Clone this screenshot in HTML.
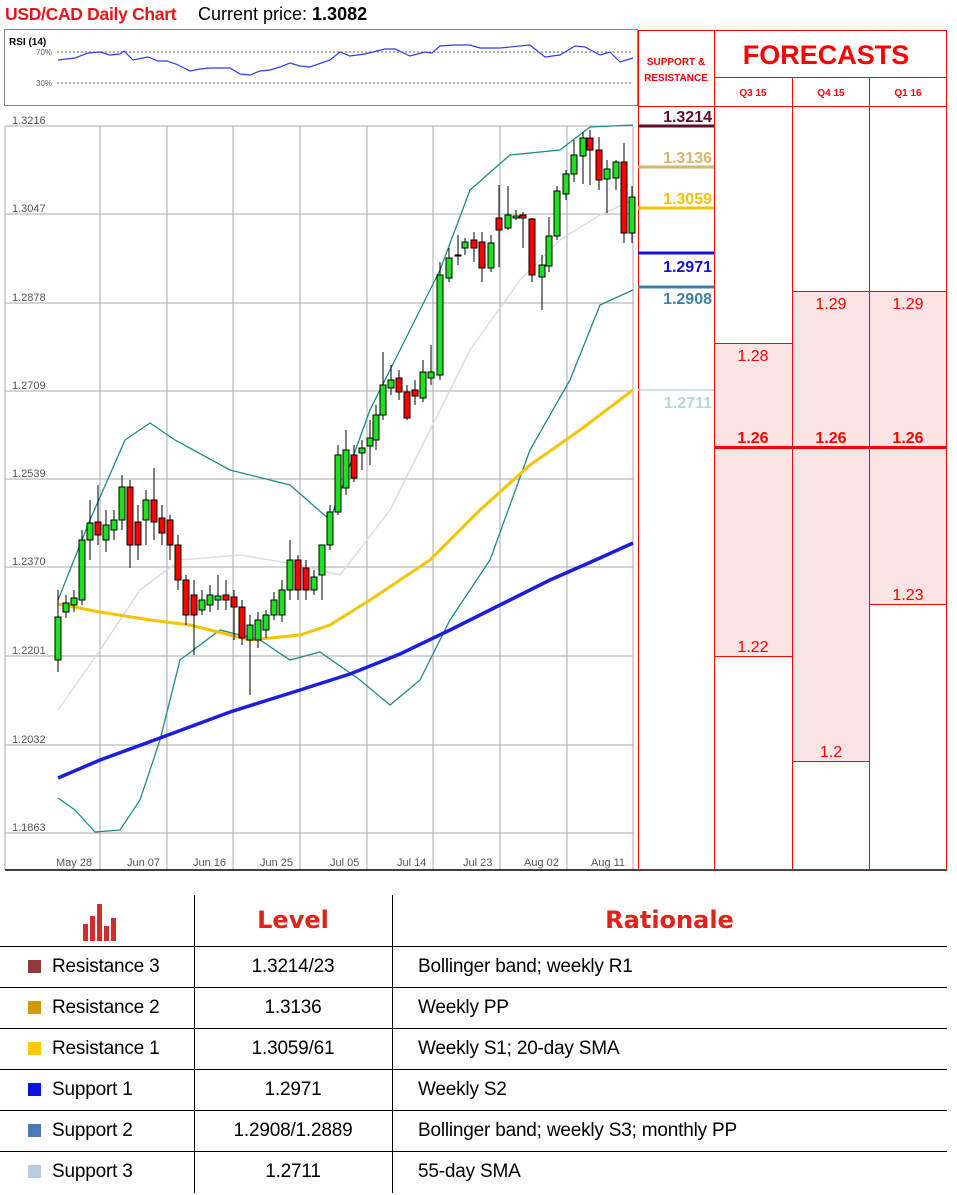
<!DOCTYPE html>
<html><head><meta charset="utf-8"><style>
body{margin:0;width:957px;height:1195px;background:#fff;font-family:"Liberation Sans",sans-serif;position:relative;overflow:hidden}
.a{position:absolute}
.row{position:absolute;left:0;width:947px;height:41px;border-top:1.5px solid #000;font-size:19px;color:#000}
.row div{position:absolute;top:9px;letter-spacing:-0.2px}
.sq{position:absolute;left:28px;top:13px!important;width:13px;height:13px}
</style></head><body>
<div class="a" style="left:5px;top:4px;font-size:17.5px;font-weight:bold;color:#e8151b;letter-spacing:-0.3px">USD/CAD Daily Chart</div>
<div class="a" style="left:198px;top:4px;font-size:18px;color:#000">Current price: <b>1.3082</b></div>

<svg class="a" style="left:0;top:0" width="957" height="880">
<rect x="4.5" y="29.5" width="633" height="76" fill="#fff" stroke="#888"/>
<text x="9" y="45" font-size="10" font-weight="bold" font-family="Liberation Sans">RSI (14)</text>
<text x="36" y="55" font-size="8" fill="#666" font-family="Liberation Sans">70%</text>
<text x="36" y="86" font-size="8" fill="#666" font-family="Liberation Sans">30%</text>
<line x1="57" y1="52" x2="633" y2="52" stroke="#666" stroke-dasharray="2,2"/>
<line x1="57" y1="83" x2="633" y2="83" stroke="#666" stroke-dasharray="2,2"/>
<polyline fill="none" stroke="#2c3cf0" stroke-width="1.2" points="58,60 75,58 88,53 100,52 110,55 120,54 124,51 133,60 148,57 158,61 167,61 176,64 190,71 200,69 210,68 230,68 240,74 250,75 260,71 270,70 280,67 290,63 300,66 310,67 330,60 340,52 350,56 365,54 385,49 395,49 410,56 425,52 432,53 440,46 455,45 470,45 480,48 500,48 530,45 545,57 560,55 575,46 585,47 600,55 610,52 620,62 633,58"/>
<g stroke="#aaa" stroke-width="1">
<line x1="5" y1="126" x2="633" y2="126"/><line x1="5" y1="214" x2="633" y2="214"/><line x1="5" y1="303" x2="633" y2="303"/><line x1="5" y1="391" x2="633" y2="391"/><line x1="5" y1="479" x2="633" y2="479"/><line x1="5" y1="567" x2="633" y2="567"/><line x1="5" y1="656" x2="633" y2="656"/><line x1="5" y1="745" x2="633" y2="745"/><line x1="5" y1="833" x2="633" y2="833"/>
<line x1="100" y1="126" x2="100" y2="870"/><line x1="167" y1="126" x2="167" y2="870"/><line x1="233" y1="126" x2="233" y2="870"/><line x1="300" y1="126" x2="300" y2="870"/><line x1="367" y1="126" x2="367" y2="870"/><line x1="433" y1="126" x2="433" y2="870"/><line x1="500" y1="126" x2="500" y2="870"/><line x1="567" y1="126" x2="567" y2="870"/><line x1="633" y1="126" x2="633" y2="870"/>
<line x1="5" y1="126" x2="5" y2="870"/>
</g>
<g font-size="11" fill="#555" font-family="Liberation Sans">
<text x="12" y="124">1.3216</text><text x="12" y="212">1.3047</text><text x="12" y="301">1.2878</text><text x="12" y="389">1.2709</text><text x="12" y="477">1.2539</text><text x="12" y="565">1.2370</text><text x="12" y="654">1.2201</text><text x="12" y="743">1.2032</text><text x="12" y="831">1.1863</text>
<text x="56" y="866">May 28</text><text x="127" y="866">Jun 07</text><text x="193" y="866">Jun 16</text><text x="260" y="866">Jun 25</text><text x="330" y="866">Jul 05</text><text x="397" y="866">Jul 14</text><text x="463" y="866">Jul 23</text><text x="524" y="866">Aug 02</text><text x="591" y="866">Aug 11</text>
</g>
<polyline fill="none" stroke="#ddd" stroke-width="1.5" points="58,710 100,650 140,590 180,560 240,555 300,565 340,575 390,510 430,430 470,350 520,280 560,240 600,215 633,200"/>
<polyline fill="none" stroke="#1f8a8a" stroke-width="1.3" points="58,600 90,520 125,440 150,423 175,440 230,470 290,485 330,520 370,410 400,350 440,270 470,190 510,155 560,150 590,127 633,125"/>
<polyline fill="none" stroke="#1f8a8a" stroke-width="1.3" points="58,798 75,810 95,832 120,830 140,800 160,740 180,660 220,630 260,640 290,660 320,652 360,680 390,705 420,680 450,620 490,560 530,450 570,380 600,305 633,290"/>
<polyline fill="none" stroke="#f5c400" stroke-width="3" points="58,604 100,612 150,620 190,625 250,640 300,635 330,625 370,600 400,580 430,560 480,510 530,465 580,430 633,390"/>
<polyline fill="none" stroke="#1a1ee0" stroke-width="3.5" points="58,778 100,760 160,738 230,712 300,690 350,674 400,654 450,630 500,605 550,580 600,558 633,543"/>
<g stroke="#000" stroke-width="1">
<line x1="58" y1="590" x2="58" y2="672"/><rect x="55" y="617" width="6" height="43" fill="#1ee01e"/>
<line x1="66" y1="595" x2="66" y2="618"/><rect x="63" y="603" width="6" height="9" fill="#1ee01e"/>
<line x1="74" y1="590" x2="74" y2="612"/><rect x="71" y="598" width="6" height="7" fill="#1ee01e"/>
<line x1="82" y1="530" x2="82" y2="605"/><rect x="79" y="540" width="6" height="60" fill="#1ee01e"/>
<line x1="90" y1="500" x2="90" y2="560"/><rect x="87" y="523" width="6" height="17" fill="#1ee01e"/>
<line x1="98" y1="485" x2="98" y2="545"/><rect x="95" y="522" width="6" height="13" fill="#f00"/>
<line x1="106" y1="510" x2="106" y2="552"/><rect x="103" y="525" width="6" height="15" fill="#1ee01e"/>
<line x1="114" y1="510" x2="114" y2="540"/><rect x="111" y="520" width="6" height="10" fill="#1ee01e"/>
<line x1="122" y1="475" x2="122" y2="530"/><rect x="119" y="487" width="6" height="33" fill="#1ee01e"/>
<line x1="130" y1="480" x2="130" y2="568"/><rect x="127" y="487" width="6" height="58" fill="#f00"/>
<line x1="138" y1="505" x2="138" y2="560"/><rect x="135" y="522" width="6" height="23" fill="#f00"/>
<line x1="146" y1="490" x2="146" y2="545"/><rect x="143" y="500" width="6" height="20" fill="#1ee01e"/>
<line x1="154" y1="468" x2="154" y2="540"/><rect x="151" y="500" width="6" height="22" fill="#f00"/>
<line x1="162" y1="505" x2="162" y2="545"/><rect x="159" y="518" width="6" height="15" fill="#f00"/>
<line x1="170" y1="515" x2="170" y2="560"/><rect x="167" y="520" width="6" height="25" fill="#f00"/>
<line x1="178" y1="535" x2="178" y2="590"/><rect x="175" y="545" width="6" height="35" fill="#f00"/>
<line x1="186" y1="575" x2="186" y2="625"/><rect x="183" y="580" width="6" height="35" fill="#f00"/>
<line x1="194" y1="580" x2="194" y2="655"/><rect x="191" y="595" width="6" height="20" fill="#f00"/>
<line x1="202" y1="590" x2="202" y2="615"/><rect x="199" y="600" width="6" height="10" fill="#1ee01e"/>
<line x1="210" y1="585" x2="210" y2="612"/><rect x="207" y="595" width="6" height="10" fill="#1ee01e"/>
<line x1="218" y1="575" x2="218" y2="610"/><rect x="215" y="596" width="6" height="4" fill="#1ee01e"/>
<line x1="226" y1="580" x2="226" y2="610"/><rect x="223" y="595" width="6" height="5" fill="#f00"/>
<line x1="234" y1="590" x2="234" y2="640"/><rect x="231" y="597" width="6" height="10" fill="#f00"/>
<line x1="242" y1="600" x2="242" y2="645"/><rect x="239" y="607" width="6" height="31" fill="#f00"/>
<line x1="250" y1="615" x2="250" y2="695"/><rect x="247" y="625" width="6" height="15" fill="#1ee01e"/>
<line x1="258" y1="612" x2="258" y2="648"/><rect x="255" y="620" width="6" height="20" fill="#1ee01e"/>
<line x1="266" y1="610" x2="266" y2="638"/><rect x="263" y="615" width="6" height="15" fill="#1ee01e"/>
<line x1="274" y1="592" x2="274" y2="620"/><rect x="271" y="600" width="6" height="15" fill="#1ee01e"/>
<line x1="282" y1="580" x2="282" y2="622"/><rect x="279" y="590" width="6" height="25" fill="#1ee01e"/>
<line x1="290" y1="540" x2="290" y2="600"/><rect x="287" y="560" width="6" height="30" fill="#1ee01e"/>
<line x1="298" y1="555" x2="298" y2="600"/><rect x="295" y="560" width="6" height="30" fill="#f00"/>
<line x1="306" y1="560" x2="306" y2="600"/><rect x="303" y="568" width="6" height="22" fill="#f00"/>
<line x1="314" y1="570" x2="314" y2="595"/><rect x="311" y="577" width="6" height="13" fill="#1ee01e"/>
<line x1="322" y1="545" x2="322" y2="600"/><rect x="319" y="545" width="6" height="30" fill="#1ee01e"/>
<line x1="330" y1="505" x2="330" y2="550"/><rect x="327" y="512" width="6" height="33" fill="#1ee01e"/>
<line x1="338" y1="445" x2="338" y2="515"/><rect x="335" y="455" width="6" height="57" fill="#1ee01e"/>
<line x1="346" y1="430" x2="346" y2="495"/><rect x="343" y="450" width="6" height="38" fill="#1ee01e"/>
<line x1="354" y1="445" x2="354" y2="482"/><rect x="351" y="455" width="6" height="23" fill="#f00"/>
<line x1="362" y1="440" x2="362" y2="470"/><rect x="359" y="448" width="6" height="5" fill="#1ee01e"/>
<line x1="370" y1="420" x2="370" y2="465"/><rect x="367" y="438" width="6" height="8" fill="#1ee01e"/>
<line x1="376" y1="405" x2="376" y2="450"/><rect x="373" y="415" width="6" height="25" fill="#1ee01e"/>
<line x1="383" y1="352" x2="383" y2="420"/><rect x="380" y="385" width="6" height="30" fill="#1ee01e"/>
<line x1="391" y1="365" x2="391" y2="395"/><rect x="388" y="380" width="6" height="8" fill="#1ee01e"/>
<line x1="399" y1="370" x2="399" y2="400"/><rect x="396" y="378" width="6" height="14" fill="#f00"/>
<line x1="407" y1="385" x2="407" y2="420"/><rect x="404" y="392" width="6" height="26" fill="#f00"/>
<line x1="415" y1="380" x2="415" y2="405"/><rect x="412" y="390" width="6" height="6" fill="#f00"/>
<line x1="423" y1="360" x2="423" y2="402"/><rect x="420" y="372" width="6" height="26" fill="#1ee01e"/>
<line x1="431" y1="345" x2="431" y2="385"/><rect x="428" y="372" width="6" height="6" fill="#1ee01e"/>
<line x1="440" y1="262" x2="440" y2="380"/><rect x="437" y="275" width="6" height="100" fill="#1ee01e"/>
<line x1="449" y1="248" x2="449" y2="282"/><rect x="446" y="258" width="6" height="20" fill="#1ee01e"/>
<line x1="458" y1="235" x2="458" y2="265"/><rect x="455" y="255" width="6" height="1" fill="#1ee01e"/>
<line x1="465" y1="238" x2="465" y2="255"/><rect x="462" y="242" width="6" height="6" fill="#1ee01e"/>
<line x1="474" y1="232" x2="474" y2="262"/><rect x="471" y="240" width="6" height="8" fill="#f00"/>
<line x1="482" y1="232" x2="482" y2="282"/><rect x="479" y="242" width="6" height="26" fill="#f00"/>
<line x1="491" y1="235" x2="491" y2="272"/><rect x="488" y="243" width="6" height="25" fill="#1ee01e"/>
<line x1="499" y1="185" x2="499" y2="267"/><rect x="496" y="218" width="6" height="12" fill="#f00"/>
<line x1="508" y1="186" x2="508" y2="230"/><rect x="505" y="215" width="6" height="13" fill="#1ee01e"/>
<line x1="516" y1="210" x2="516" y2="220"/><rect x="513" y="216" width="6" height="2" fill="#1ee01e"/>
<line x1="523" y1="212" x2="523" y2="248"/><rect x="520" y="215" width="6" height="3" fill="#f00"/>
<line x1="532" y1="218" x2="532" y2="282"/><rect x="529" y="219" width="6" height="56" fill="#f00"/>
<line x1="542" y1="255" x2="542" y2="310"/><rect x="539" y="265" width="6" height="12" fill="#1ee01e"/>
<line x1="549" y1="217" x2="549" y2="272"/><rect x="546" y="236" width="6" height="30" fill="#1ee01e"/>
<line x1="557" y1="186" x2="557" y2="240"/><rect x="554" y="191" width="6" height="45" fill="#1ee01e"/>
<line x1="566" y1="170" x2="566" y2="200"/><rect x="563" y="174" width="6" height="20" fill="#1ee01e"/>
<line x1="574" y1="140" x2="574" y2="182"/><rect x="571" y="155" width="6" height="19" fill="#1ee01e"/>
<line x1="583" y1="132" x2="583" y2="184"/><rect x="580" y="138" width="6" height="18" fill="#1ee01e"/>
<line x1="590" y1="130" x2="590" y2="185"/><rect x="587" y="138" width="6" height="12" fill="#f00"/>
<line x1="599" y1="137" x2="599" y2="190"/><rect x="596" y="150" width="6" height="30" fill="#f00"/>
<line x1="607" y1="160" x2="607" y2="213"/><rect x="604" y="169" width="6" height="10" fill="#1ee01e"/>
<line x1="616" y1="160" x2="616" y2="190"/><rect x="613" y="162" width="6" height="16" fill="#1ee01e"/>
<line x1="624" y1="143" x2="624" y2="243"/><rect x="621" y="162" width="6" height="71" fill="#f00"/>
<line x1="632" y1="186" x2="632" y2="243"/><rect x="629" y="197" width="6" height="36" fill="#1ee01e"/>
</g>
<line x1="5" y1="870" x2="947" y2="870" stroke="#000" stroke-width="1.5"/>
<rect x="715" y="343" width="77" height="313" fill="#fde4e4"/>
<rect x="793" y="291" width="76" height="470" fill="#fde4e4"/>
<rect x="870" y="291" width="77" height="313" fill="#fde4e4"/>
<g stroke="#f00" stroke-width="1" fill="none">
<rect x="638.5" y="30.5" width="308" height="839"/>
<line x1="714.5" y1="30" x2="714.5" y2="870"/>
<line x1="792.5" y1="77" x2="792.5" y2="870"/>
<line x1="869.5" y1="77" x2="869.5" y2="870"/>
<line x1="714" y1="77.5" x2="947" y2="77.5"/>
<line x1="638" y1="106.5" x2="947" y2="106.5"/>
<line x1="715" y1="343.5" x2="792" y2="343.5"/>
<line x1="793" y1="291.5" x2="947" y2="291.5"/>
<line x1="715" y1="656.5" x2="792" y2="656.5"/>
<line x1="793" y1="761.5" x2="869" y2="761.5"/>
<line x1="870" y1="604.5" x2="947" y2="604.5"/>
<line x1="714" y1="447.5" x2="947" y2="447.5" stroke-width="3"/>
</g>
<g font-family="Liberation Sans" fill="#f00" font-weight="bold" text-anchor="middle">
<text x="676" y="65" font-size="10">SUPPORT &amp;</text>
<text x="676" y="81" font-size="10">RESISTANCE</text>
<text x="826" y="64" font-size="27">FORECASTS</text>
<text x="753" y="96" font-size="10">Q3 15</text>
<text x="831" y="96" font-size="10">Q4 15</text>
<text x="908" y="96" font-size="10">Q1 16</text>
</g>
<g font-family="Liberation Sans" fill="#f00" font-size="16" text-anchor="middle">
<text x="753" y="361">1.28</text><text x="831" y="309">1.29</text><text x="908" y="309">1.29</text>
<text x="753" y="443" font-weight="bold">1.26</text><text x="831" y="443" font-weight="bold">1.26</text><text x="908" y="443" font-weight="bold">1.26</text>
<text x="753" y="652">1.22</text><text x="831" y="757">1.2</text><text x="908" y="600">1.23</text>
</g>
<g stroke-width="3">
<line x1="638" y1="126" x2="714" y2="126" stroke="#5a0f2f"/>
<line x1="638" y1="167" x2="714" y2="167" stroke="#d8b56a"/>
<line x1="638" y1="208" x2="714" y2="208" stroke="#f5c400"/>
<line x1="638" y1="253" x2="714" y2="253" stroke="#1010e0"/>
<line x1="638" y1="287" x2="714" y2="287" stroke="#3a80a8"/>
<line x1="638" y1="390" x2="714" y2="390" stroke="#b5d8d8" stroke-width="1.5"/>
</g>
<g font-family="Liberation Sans" font-size="16" font-weight="bold" text-anchor="end">
<text x="712" y="122" fill="#5a0f2f">1.3214</text>
<text x="712" y="163" fill="#d8b56a">1.3136</text>
<text x="712" y="204" fill="#f5c400">1.3059</text>
<text x="712" y="272" fill="#1010e0">1.2971</text>
<text x="712" y="304" fill="#3a80a8">1.2908</text>
<text x="712" y="408" fill="#b5d8d8">1.2711</text>
</g>
</svg>

<div class="a" style="left:194px;top:895px;width:1px;height:298px;background:#000"></div>
<div class="a" style="left:392px;top:895px;width:1px;height:298px;background:#000"></div>
<svg class="a" style="left:82px;top:904px" width="38" height="38">
<rect x="1" y="20" width="5" height="17" fill="#d42a2a"/><rect x="8" y="12" width="5" height="25" fill="#d42a2a"/><rect x="15" y="0" width="5" height="37" fill="#d42a2a"/><rect x="22" y="22" width="5" height="15" fill="#d42a2a"/><rect x="29" y="14" width="5" height="23" fill="#d42a2a"/>
</svg>
<div class="a" style="left:194px;width:198px;top:906px;text-align:center;font-size:24px;font-weight:900;color:#e0221a;font-family:'DejaVu Sans',sans-serif">Level</div>
<div class="a" style="left:392px;width:555px;top:906px;text-align:center;font-size:24px;font-weight:900;color:#e0221a;font-family:'DejaVu Sans',sans-serif">Rationale</div>

<div class="row" style="top:946px"><span class="sq" style="background:#953a3a"></span><div style="left:52px">Resistance 3</div><div style="left:194px;width:198px;text-align:center">1.3214/23</div><div style="left:418px">Bollinger band; weekly R1</div></div>
<div class="row" style="top:987px"><span class="sq" style="background:#d09a00"></span><div style="left:52px">Resistance 2</div><div style="left:194px;width:198px;text-align:center">1.3136</div><div style="left:418px">Weekly PP</div></div>
<div class="row" style="top:1028px"><span class="sq" style="background:#ffc800"></span><div style="left:52px">Resistance 1</div><div style="left:194px;width:198px;text-align:center">1.3059/61</div><div style="left:418px">Weekly S1; 20-day SMA</div></div>
<div class="row" style="top:1069px"><span class="sq" style="background:#0a14e0"></span><div style="left:52px">Support 1</div><div style="left:194px;width:198px;text-align:center">1.2971</div><div style="left:418px">Weekly S2</div></div>
<div class="row" style="top:1110px"><span class="sq" style="background:#4a7ab8"></span><div style="left:52px">Support 2</div><div style="left:194px;width:198px;text-align:center">1.2908/1.2889</div><div style="left:418px">Bollinger band; weekly S3; monthly PP</div></div>
<div class="row" style="top:1151px"><span class="sq" style="background:#b8cce4"></span><div style="left:52px">Support 3</div><div style="left:194px;width:198px;text-align:center">1.2711</div><div style="left:418px">55-day SMA</div></div>
</body></html>
